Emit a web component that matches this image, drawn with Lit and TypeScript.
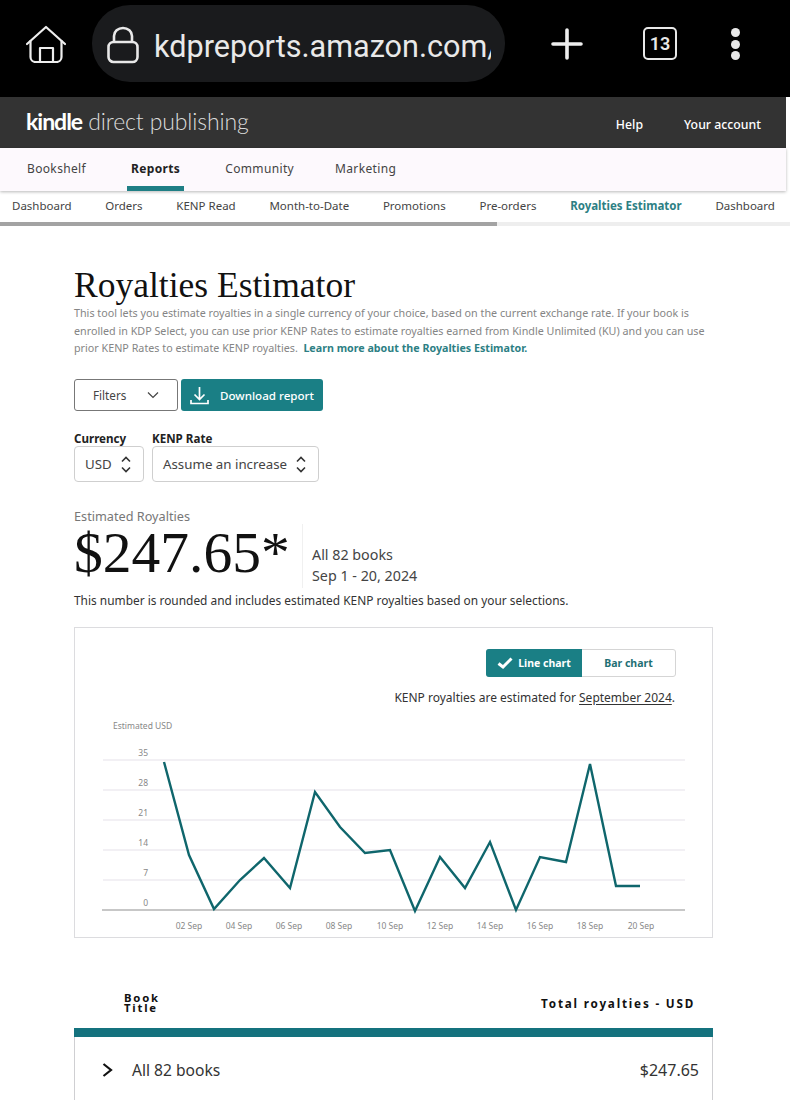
import { LitElement, html, css, svg } from "lit";
import { customElement } from "lit/decorators.js";

const pts = [[164,762],[189,855],[214,909],[240,880],[264,858],[290,888],[315,792],[340,827],[365,853],[390,850],[415,911],[440,857],[465,888],[490,842],[516,910],[540,857],[566,862],[590,764],[616,886],[640,886]];
const grid = [["35",760],["28",790],["21",820],["14",850],["7",880]] as [string, number][];
const xl = [["02 Sep",189],["04 Sep",239],["06 Sep",289],["08 Sep",339],["10 Sep",390],["12 Sep",440],["14 Sep",490],["16 Sep",540],["18 Sep",590],["20 Sep",641]] as [string, number][];

@customElement("app-root")
export class AppRoot extends LitElement {
  static styles = css`
    :host { display: block; width: 790px; height: 1100px; overflow: hidden; background: #fff; font-family: "Noto Sans", "Open Sans", sans-serif; color: #2b2b2b; }
    .browser { height: 97px; background: #000; display: flex; align-items: flex-start; box-sizing: border-box; }
    .home { margin: 25px 0 0 26px; width: 40px; height: 38px; }
    .pill { margin: 5px 0 0 26px; width: 413px; height: 77px; border-radius: 38px; background: #1a1b1d; display: flex; align-items: center; box-sizing: border-box; padding-left: 15px; overflow: hidden; }
    .lock { width: 32px; height: 38px; flex: none; margin-top: 2px; }
    .url { margin-left: 15px; width: 337px; overflow: hidden; white-space: nowrap; font: 400 30.6px Roboto, sans-serif; color: #e9e9e9; margin-top: 5px; }
    .plus { margin: 28px 0 0 46px; width: 32px; height: 32px; }
    .tabs { margin: 27px 0 0 60px; width: 34px; height: 33px; box-sizing: border-box; border: 2.5px solid #e8e8e8; border-radius: 5px; color: #e8e8e8; font: 600 18px Roboto, sans-serif; display: flex; align-items: center; justify-content: center; }
    .dots { margin: 28px 0 0 54px; width: 10px; display: flex; flex-direction: column; gap: 2.5px; }
    .dots i { width: 9px; height: 9px; border-radius: 50%; background: #e8e8e8; display: block; }
    .kdp { width: 786px; height: 51px; background: #333333; display: flex; align-items: center; box-sizing: border-box; padding: 0 25px 0 26px; color: #fff; }
    .logo { font: 300 23px Lato, sans-serif; color: #dcdcdc; letter-spacing: -0.12px; margin-top: -4px; }
    .logo b { font-weight: 700; color: #fff; letter-spacing: -1px; }
    .kdp .r { margin-left: auto; display: flex; gap: 41px; font-size: 12.3px; font-weight: 500; margin-top: 3px; }
    .nav { width: 786px; height: 43px; background: #fdf9fd; display: flex; box-shadow: 0 1px 3px rgba(0,0,0,.28); position: relative; box-sizing: border-box; padding-left: 27px; gap: 45px; font-size: 12px; color: #444; }
    .nav span { line-height: 42px; position: relative; letter-spacing: .35px; }
    .nav span:last-child { margin-left: -4px; }
    .nav .on { font-weight: 700; color: #222; }
    .nav .on::after { content: ""; position: absolute; left: -4px; right: -4px; bottom: 0; height: 5px; background: #1f7f85; }
    .sub { height: 31px; display: flex; justify-content: space-between; box-sizing: border-box; padding: 0 15px 0 12px; font-size: 11.5px; line-height: 30px; color: #444; white-space: nowrap; }
    .sub .on { font-weight: 700; color: #2d7f84; }
    .scroll { height: 4px; background: #eeeeee; }
    .scroll i { display: block; width: 497px; height: 4px; background: #a3a3a3; }
    .main { padding: 0 77px 0 74px; }
    h1 { margin: 39px 0 0; font: 400 35.5px/40px "Liberation Serif", serif; color: #111; height: 40px; }
    .intro { margin: 0; font-size: 10.75px; line-height: 17.7px; color: #858585; white-space: nowrap; }
    .intro a { color: #2d7f84; font-weight: 700; font-size: 10.7px; }
    .btns { margin-top: 21px; display: flex; gap: 3px; }
    .filters { width: 104px; height: 32px; box-sizing: border-box; border: 1px solid #777; border-radius: 3px; display: flex; align-items: center; padding-left: 18px; font-size: 11.7px; color: #444; gap: 21px; }
    .dl { width: 142px; height: 32px; box-sizing: border-box; background: #1a7f85; border-radius: 3px; color: #fff; display: flex; align-items: center; padding-left: 9px; font-size: 11.6px; font-weight: 500; gap: 11px; }
    .sels { margin-top: 20px; display: flex; gap: 8px; }
    .sel label { display: block; font-size: 11.6px; font-weight: 700; line-height: 15px; color: #222; }
    .box { height: 36px; box-sizing: border-box; border: 1px solid #cfcfcf; border-radius: 4px; display: flex; align-items: center; padding-left: 10px; font-size: 13.3px; color: #444; gap: 9px; }
    .est { margin-top: 26px; font-size: 12.7px; line-height: 16px; color: #777; }
    .big { display: flex; align-items: flex-start; height: 66px; }
    .amount { font: 400 57.5px/56px "Liberation Serif", serif; color: #111; width: 228px; margin-top: 1px; white-space: nowrap; }
    .meta { border-left: 1px solid #f0f0f0; padding: 20px 0 0 9px; font-size: 14.3px; line-height: 21px; color: #444; height: 44px; }
    .note { margin: 2px 0 0; font-size: 11.9px; line-height: 16px; color: #333; white-space: nowrap; }
    .card { margin-top: 19px; height: 311px; box-sizing: border-box; border: 1px solid #dcdcdf; display: flex; flex-direction: column; }
    .toggle { margin: 21px 36px 0 auto; display: flex; width: 190px; height: 28px; box-sizing: border-box; border: 1px solid #d5d5d5; border-radius: 3px; font-size: 10.5px; font-weight: 700; }
    .toggle .a { margin: -1px 0 -1px -1px; width: 96px; background: #1a7f85; color: #fff; border-radius: 3px 0 0 3px; display: flex; align-items: center; justify-content: center; gap: 5px; }
    .toggle .b { flex: 1; display: flex; align-items: center; justify-content: center; color: #1f6f74; }
    .kenp { margin: 13px 37px 0 0; text-align: right; font-size: 12px; line-height: 16px; color: #333; }
    .kenp u { text-underline-offset: 2px; }
    .card svg.chart { display: block; flex: none; }
    .card text { font-family: "Noto Sans", sans-serif; font-size: 8.5px; fill: #888; }
    .thead { margin-top: 53px; display: flex; justify-content: space-between; padding: 2px 18px 0 50px; font-size: 11.3px; font-weight: 700; letter-spacing: 1.8px; color: #111; height: 37px; box-sizing: border-box; }
    .thead .t { line-height: 10px; width: 40px; }
    .thead .v { line-height: 30px; margin-top: -5px; font-size: 11.7px; }
    .bar { height: 9px; background: #14727e; }
    .row { height: 80px; border: 1px solid #cfcfd2; border-width: 0 1px; display: flex; align-items: flex-start; padding: 22px 13px 0 27px; font-size: 15.6px; line-height: 22px; color: #333; }
    .row svg { width: 11px; height: 18px; margin: 2px 19px 0 0; }
    .row .amt { margin-left: auto; font-size: 16px; }
  `;
  render() {
    const line = pts.map((p) => p.join(",")).join(" ");
    return html`
      <div class="browser">
        <svg class="home" viewBox="0 0 40 38" fill="none" stroke="#eee" stroke-width="2.2" stroke-linejoin="round" stroke-linecap="round">
          <path d="M1 19 L20 2 L39 19" />
          <path d="M4.5 16 V32 a5 5 0 0 0 5 5 H30.5 a5 5 0 0 0 5 -5 V16" />
          <path d="M14 37 V23 H27 V37" />
        </svg>
        <div class="pill">
          <svg class="lock" viewBox="0 0 32 38" fill="none" stroke="#e8e8e8" stroke-width="2.6">
            <rect x="1.5" y="16" width="29" height="20" rx="5" />
            <path d="M7 16 V10 a9 8 0 0 1 18 0 V16" />
          </svg>
          <div class="url">kdpreports.amazon.com/</div>
        </div>
        <svg class="plus" viewBox="0 0 32 32" stroke="#eee" stroke-width="3.6" stroke-linecap="round"><path d="M16 2V30M2 16H30" /></svg>
        <div class="tabs">13</div>
        <div class="dots"><i></i><i></i><i></i></div>
      </div>
      <div class="kdp">
        <div class="logo"><b>kindle</b> direct publishing</div>
        <div class="r"><span>Help</span><span>Your account</span></div>
      </div>
      <div class="nav">
        <span>Bookshelf</span><span class="on">Reports</span><span>Community</span><span>Marketing</span>
      </div>
      <div class="sub">
        <span>Dashboard</span><span>Orders</span><span>KENP Read</span><span>Month-to-Date</span><span>Promotions</span><span>Pre-orders</span><span class="on">Royalties Estimator</span><span>Dashboard</span>
      </div>
      <div class="scroll"><i></i></div>
      <div class="main">
        <h1>Royalties Estimator</h1>
        <p class="intro">This tool lets you estimate royalties in a single currency of your choice, based on the current exchange rate. If your book is<br />enrolled in KDP Select, you can use prior KENP Rates to estimate royalties earned from Kindle Unlimited (KU) and you can use<br />prior KENP Rates to estimate KENP royalties.&nbsp; <a>Learn more about the Royalties Estimator.</a></p>
        <div class="btns">
          <div class="filters">Filters
            <svg width="12" height="8" viewBox="0 0 12 8" fill="none" stroke="#444" stroke-width="1.2"><path d="M1 1.5 L6 6.5 L11 1.5" /></svg>
          </div>
          <div class="dl">
            <svg width="19" height="19" viewBox="0 0 19 19" fill="none" stroke="#fff" stroke-width="1.7"><path d="M9.5 1V13M4.5 8.5 L9.5 13.5 L14.5 8.5M1 14V17.5H18V14" /></svg>
            Download report
          </div>
        </div>
        <div class="sels">
          <div class="sel"><label>Currency</label>
            <div class="box" style="width:70px">USD ${this.updown()}</div></div>
          <div class="sel"><label>KENP Rate</label>
            <div class="box" style="width:167px">Assume an increase ${this.updown()}</div></div>
        </div>
        <div class="est">Estimated Royalties</div>
        <div class="big">
          <div class="amount">$247.65*</div>
          <div class="meta">All 82 books<br />Sep 1 - 20, 2024</div>
        </div>
        <p class="note">This number is rounded and includes estimated KENP royalties based on your selections.</p>
        <div class="card">
          <div class="toggle">
            <div class="a">
              <svg width="16" height="12" viewBox="0 0 16 12" fill="none" stroke="#fff" stroke-width="3"><path d="M1.5 6.5 L6 10 L14.5 1.5" /></svg>
              Line chart
            </div>
            <div class="b">Bar chart</div>
          </div>
          <div class="kenp">KENP royalties are estimated for <u>September 2024</u>.</div>
          <svg class="chart" width="637" height="231" viewBox="75 706 637 231">
            <text x="113" y="729">Estimated USD</text>
            ${grid.map(([l, y]) => svg`
              <line x1="103" x2="685" y1=${y} y2=${y} stroke="#e6e2ea" stroke-width="1.2" />
              <text x="148" y=${y - 4} text-anchor="end">${l}</text>`)}
            <text x="148" y="906" text-anchor="end">0</text>
            <line x1="102" x2="685" y1="910" y2="910" stroke="#b5b5b5" stroke-width="1.5" />
            <polyline points=${line} fill="none" stroke="#0f666c" stroke-width="2.4" stroke-linejoin="miter" />
            ${xl.map(([l, x]) => svg`<text x=${x} y="929" text-anchor="middle">${l}</text>`)}
          </svg>
        </div>
        <div class="thead">
          <div class="t">Book Title</div>
          <div class="v">Total royalties - USD</div>
        </div>
        <div class="bar"></div>
        <div class="row">
          <svg viewBox="0 0 11 18" fill="none" stroke="#111" stroke-width="2.2"><path d="M1.5 3 L9 9 L1.5 15" /></svg>
          All 82 books
          <span class="amt">$247.65</span>
        </div>
      </div>
    `;
  }
  updown() {
    return html`<svg width="10" height="17" viewBox="0 0 10 17" fill="none" stroke="#333" stroke-width="1.6"><path d="M1 5.5 L5 1.5 L9 5.5M1 11.5 L5 15.5 L9 11.5" /></svg>`;
  }
}
